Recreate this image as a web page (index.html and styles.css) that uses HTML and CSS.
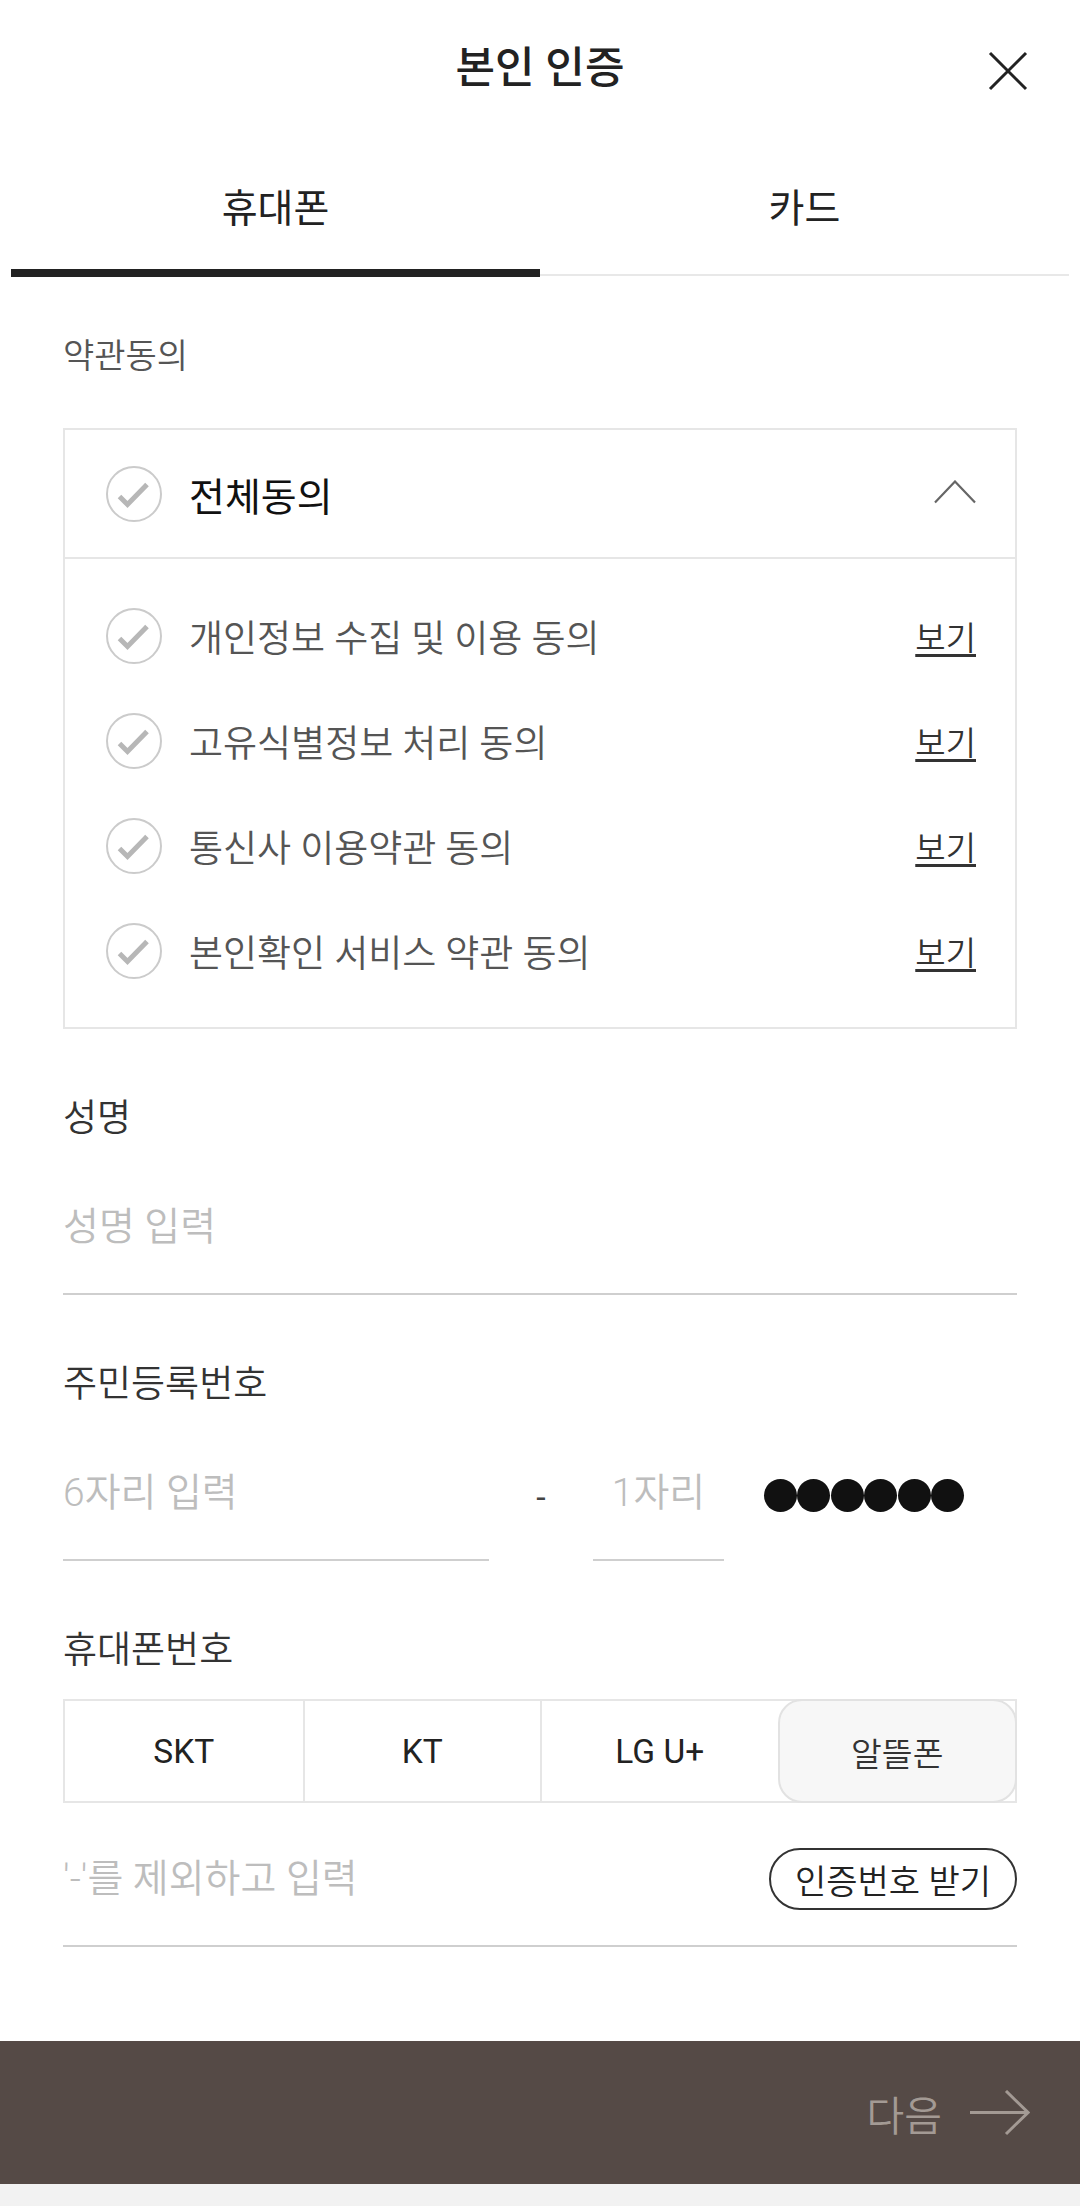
FILE: index.html
```html
<!DOCTYPE html>
<html lang="ko">
<head>
<meta charset="utf-8">
<title>본인 인증</title>
<link rel="stylesheet" href="styles.css">
</head>
<body>
<div class="page">
  <header class="header">
    <span></span>
    <h1 class="title">본인 인증</h1>
    <button class="close" aria-label="닫기">
      <svg width="40" height="40" viewBox="0 0 40 40"><path d="M2 2L38 38M38 2L2 38" stroke="#222" stroke-width="3" fill="none"/></svg>
    </button>
  </header>

  <nav class="tabs">
    <div class="tab is-active">휴대폰</div>
    <div class="tab">카드</div>
  </nav>

  <main class="content">
    <div class="terms-label">약관동의</div>
    <section class="terms-box">
      <div class="all-row">
        <span class="check">
          <svg width="56" height="56" viewBox="0 0 56 56"><circle cx="28" cy="28" r="27" fill="none" stroke="#cbcbcb" stroke-width="2"/><path d="M13.5 30.5L21.5 38.5L41 18.5" fill="none" stroke="#b7b7b7" stroke-width="5"/></svg>
        </span>
        <span class="all-text">전체동의</span>
        <svg class="chevron" width="42" height="24" viewBox="0 0 42 24"><path d="M1 22.5L21 1.5L41 22.5" fill="none" stroke="#666" stroke-width="2.2"/></svg>
      </div>
      <ul class="agree-list">
        <li class="agree-row">
          <span class="check"><svg width="56" height="56" viewBox="0 0 56 56"><circle cx="28" cy="28" r="27" fill="none" stroke="#cbcbcb" stroke-width="2"/><path d="M13.5 30.5L21.5 38.5L41 18.5" fill="none" stroke="#b7b7b7" stroke-width="5"/></svg></span>
          <span class="agree-text">개인정보 수집 및 이용 동의</span>
          <a class="view" href="#">보기</a>
        </li>
        <li class="agree-row">
          <span class="check"><svg width="56" height="56" viewBox="0 0 56 56"><circle cx="28" cy="28" r="27" fill="none" stroke="#cbcbcb" stroke-width="2"/><path d="M13.5 30.5L21.5 38.5L41 18.5" fill="none" stroke="#b7b7b7" stroke-width="5"/></svg></span>
          <span class="agree-text">고유식별정보 처리 동의</span>
          <a class="view" href="#">보기</a>
        </li>
        <li class="agree-row">
          <span class="check"><svg width="56" height="56" viewBox="0 0 56 56"><circle cx="28" cy="28" r="27" fill="none" stroke="#cbcbcb" stroke-width="2"/><path d="M13.5 30.5L21.5 38.5L41 18.5" fill="none" stroke="#b7b7b7" stroke-width="5"/></svg></span>
          <span class="agree-text">통신사 이용약관 동의</span>
          <a class="view" href="#">보기</a>
        </li>
        <li class="agree-row">
          <span class="check"><svg width="56" height="56" viewBox="0 0 56 56"><circle cx="28" cy="28" r="27" fill="none" stroke="#cbcbcb" stroke-width="2"/><path d="M13.5 30.5L21.5 38.5L41 18.5" fill="none" stroke="#b7b7b7" stroke-width="5"/></svg></span>
          <span class="agree-text">본인확인 서비스 약관 동의</span>
          <a class="view" href="#">보기</a>
        </li>
      </ul>
    </section>

    <div class="field">
      <div class="field-label">성명</div>
      <div class="input-line"><input class="text-input" type="text" placeholder="성명 입력"></div>
    </div>

    <div class="field">
      <div class="field-label">주민등록번호</div>
      <div class="rrn">
        <div class="rrn-first"><input class="text-input" type="text" placeholder="6자리 입력"></div>
        <span class="dash">-</span>
        <div class="rrn-second"><input class="text-input center" type="text" placeholder="1자리"></div>
        <span class="dots"><i></i><i></i><i></i><i></i><i></i><i></i></span>
      </div>
    </div>

    <div class="field">
      <div class="field-label">휴대폰번호</div>
      <div class="carriers">
        <div class="carrier">SKT</div>
        <div class="carrier">KT</div>
        <div class="carrier">LG U+</div>
        <div class="carrier is-selected">알뜰폰</div>
      </div>
      <div class="phone-row">
        <input class="text-input" type="text" placeholder="'-'를 제외하고 입력">
        <button class="code-btn">인증번호 받기</button>
      </div>
    </div>
  </main>

  <footer class="footer">
    <span class="next-text">다음</span>
    <svg width="60" height="46" viewBox="0 0 60 46"><path d="M0 22.5H58M36 1L58 22.5L36 44" fill="none" stroke="#a39a94" stroke-width="3"/></svg>
  </footer>
</div>
</body>
</html>
```

FILE: styles.css
```css
* { box-sizing: border-box; }

body {
  margin: 0;
  background: #f2f2f2;
  font-family: Roboto, "Noto Sans CJK KR", sans-serif;
  color: #222;
}

.page {
  width: 1080px;
  background: #fff;
}

.header {
  height: 137px;
  display: grid;
  grid-template-columns: 1fr auto 1fr;
  align-items: center;
}

.title {
  margin: 0;
  font-size: 43px;
  line-height: 1;
  font-weight: 500;
  color: #222;
}

.close {
  justify-self: end;
  margin: 5px 52px 0 0;
  padding: 0;
  border: 0;
  background: none;
  width: 40px;
  height: 40px;
  display: flex;
}

.tabs {
  margin: 0 11px;
  display: flex;
  background: linear-gradient(#e8e8e8, #e8e8e8) 0 calc(100% - 1px) / 100% 2px no-repeat;
}

.tab {
  flex: 1;
  text-align: center;
  font-size: 39px;
  line-height: 46px;
  padding: 49px 0 37px;
  border-bottom: 8px solid transparent;
  color: #222;
  font-weight: 400;
}

.tab.is-active {
  border-bottom-color: #222;
}

.content {
  padding: 0 63px;
}

.terms-label {
  margin-top: 59px;
  font-size: 34px;
  line-height: 40px;
  font-weight: 350;
  color: #555;
}

.terms-box {
  margin-top: 52px;
  border: 2px solid #e6e6e6;
}

.all-row {
  height: 129px;
  display: flex;
  align-items: center;
  padding: 0 39px 0 41px;
  border-bottom: 2px solid #e6e6e6;
}

.check {
  width: 56px;
  height: 56px;
  display: flex;
  flex: none;
}

.all-text {
  flex: 1;
  margin-left: 27px;
  font-size: 39px;
  color: #111;
}

.chevron {
  flex: none;
  margin-top: -4px;
}

.agree-list {
  list-style: none;
  margin: 0;
  padding: 24px 0;
}

.agree-row {
  height: 105px;
  display: flex;
  align-items: center;
  padding: 0 39px 0 41px;
}

.agree-text {
  flex: 1;
  margin-left: 27px;
  font-size: 37px;
  font-weight: 350;
  color: #555;
}

.view {
  font-size: 33px;
  font-weight: 350;
  color: #333;
  text-decoration: underline;
  text-decoration-thickness: 3px;
  text-underline-offset: 4px;
}

.field {
  margin-top: 70px;
}

.field-label {
  font-size: 37px;
  line-height: 40px;
  font-weight: 350;
  color: #333;
}

.input-line {
  margin-top: 22px;
  height: 134px;
  border-bottom: 2px solid #cfcfcf;
  display: flex;
  align-items: center;
}

.text-input {
  width: 100%;
  height: 100%;
  border: 0;
  outline: none;
  padding: 0;
  background: transparent;
  font-family: inherit;
  font-size: 39px;
  font-weight: 350;
  color: #222;
}

.text-input::placeholder {
  color: #bdbdbd;
}

.text-input.center {
  text-align: center;
}

.rrn {
  margin-top: 22px;
  height: 134px;
  display: flex;
  align-items: center;
}

.rrn-first,
.rrn-second {
  height: 134px;
  border-bottom: 2px solid #cfcfcf;
}

.rrn-first { width: 426px; }
.rrn-second { width: 131px; }

.dash {
  width: 104px;
  text-align: center;
  font-size: 34px;
  color: #444;
  margin-top: 6px;
}

.dots {
  margin-left: 40px;
  display: flex;
  margin-top: 2px;
}

.dots i {
  width: 33px;
  height: 33px;
  margin-right: 0.4px;
  border-radius: 50%;
  background: #111;
}

.carriers {
  margin-top: 28px;
  display: grid;
  grid-template-columns: repeat(4, 1fr);
  border: 2px solid #e6e6e6;
  height: 104px;
}

.carrier {
  display: flex;
  align-items: center;
  justify-content: center;
  font-size: 33.5px;
  color: #222;
  border-left: 2px solid #e6e6e6;
}

.carrier:first-child {
  border-left: 0;
}

.carrier.is-selected {
  margin: -2px -2px -2px 0;
  border: 2px solid #e2e2e2;
  border-radius: 24px;
  background: #f7f7f7;
  color: #333;
  font-weight: 350;
}

.phone-row {
  margin-top: 10px;
  height: 134px;
  border-bottom: 2px solid #cfcfcf;
  display: flex;
  align-items: center;
}

.phone-row .text-input {
  flex: 1;
  width: auto;
}

.code-btn {
  flex: none;
  width: 248px;
  height: 62px;
  border: 2px solid #333;
  border-radius: 31px;
  background: #fff;
  font-family: inherit;
  font-size: 34px;
  font-weight: 350;
  color: #222;
  padding: 0;
}

.footer {
  margin-top: 94px;
  height: 143px;
  background: #554a46;
  display: flex;
  justify-content: flex-end;
  align-items: center;
  gap: 28px;
  padding-right: 50px;
}

.next-text {
  font-size: 41px;
  font-weight: 350;
  color: #a39a94;
}
```
